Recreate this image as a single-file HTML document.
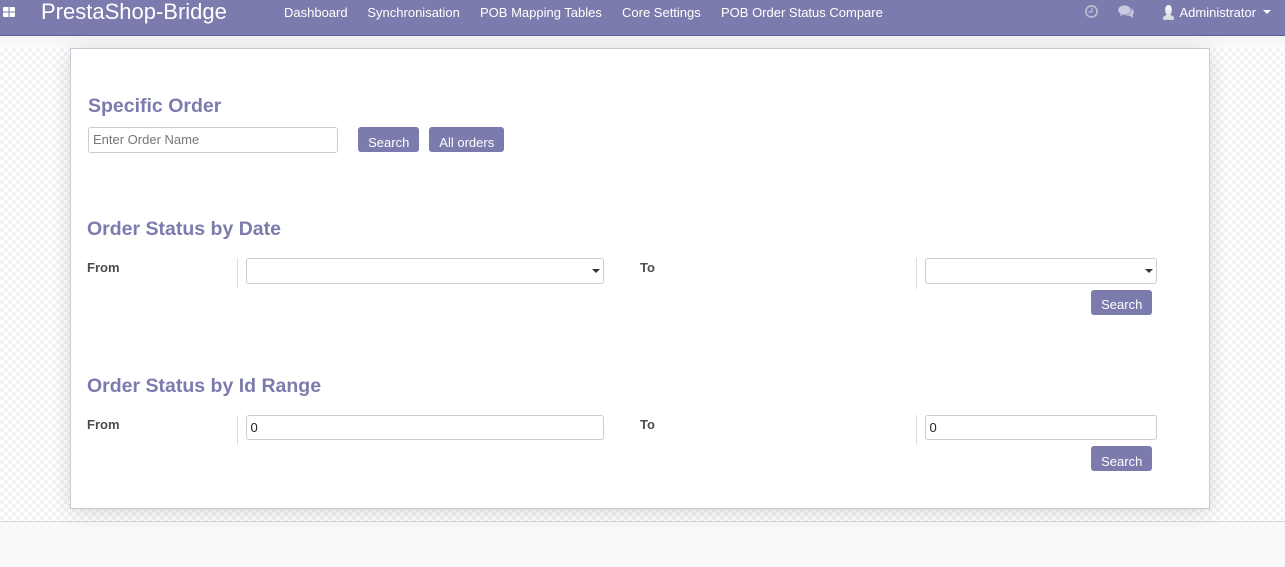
<!DOCTYPE html>
<html><head><meta charset="utf-8"><style>
html,body{margin:0;padding:0}
body{width:1285px;height:567px;overflow:hidden;position:relative;background:#f9f9f9;font-family:"Liberation Sans",sans-serif;font-size:13px;color:#4c4c4c}
.a{position:absolute;white-space:nowrap}
#nav{left:0;top:0;width:1285px;height:35px;background:#7c7bad;border-bottom:1px solid #5f5e97;z-index:3}
.n{color:#fff;font-size:13px;line-height:15px;top:5px}
#wrap{left:0;top:36px;width:1285px;height:485px;background:linear-gradient(#f3f3f3,#fbfbfb 12px);overflow:hidden}
#chk{left:0;top:12px;width:1285px;height:473px;background-color:#fff;background-image:conic-gradient(#f4f4f4 25%,#fff 0 50%,#f4f4f4 0 75%,#fff 0);background-size:8px 8px}
#sheet{left:70px;top:48px;width:1138px;height:459px;background:#fff;border:1px solid #c8c8d4;box-shadow:0 3px 20px rgba(0,0,0,.15)}
#foot{left:0;top:521px;width:1285px;height:46px;background:#f9f9f9;border-top:1px solid #d9d9d9;box-sizing:border-box}
h2{position:absolute;margin:0;font-size:19.5px;line-height:24px;font-weight:bold;color:#7c7bad;white-space:nowrap}
.inp{position:absolute;box-sizing:border-box;background:#fff;border:1px solid #ccc;border-radius:3px;font-size:13px;color:#222;padding-left:4px;white-space:nowrap}
.btn{position:absolute;box-sizing:border-box;height:25px;background:#7c7bad;color:#fff;border-radius:3px;font-size:13px;line-height:15px;padding-top:8px;padding-left:.5px;text-align:center}
.lb{position:absolute;font-weight:bold;font-size:13px;line-height:15px;color:#4c4c4c}
.v{position:absolute;width:1px;height:31px;background:#ddd}
.c{position:absolute;right:3px;top:10px;width:0;height:0;border:4px solid transparent;border-top-color:#333;border-bottom:0}
</style></head><body>
<div class="a" id="wrap"><div class="a" id="chk"></div></div>
<div class="a" id="foot"></div>
<div class="a" id="nav">
<svg class="a" style="left:3px;top:7px" width="12" height="10" viewBox="0 0 12 10"><path fill="#fff" d="M0 1q0-1 1-1h4.500v4.500H0zM6.500 0H11q1 0 1 1v3.500H6.500zM0 5.500h5.500V10H1q-1 0-1-1zM6.500 5.500H12V9q0 1-1 1H6.500z"/></svg>
<div class="a" style="left:41px;top:-2px;color:#fff;font-size:22px;line-height:28px">PrestaShop-Bridge</div>
<div class="a n" style="left:284px">Dashboard</div>
<div class="a n" style="left:367.400px">Synchronisation</div>
<div class="a n" style="left:480px">POB Mapping Tables</div>
<div class="a n" style="left:622px">Core Settings</div>
<div class="a n" style="left:721px">POB Order Status Compare</div>
<svg class="a" style="left:1085px;top:5px" width="13" height="13" viewBox="0 0 13 13"><circle cx="6.500" cy="6.500" r="5.600" fill="none" stroke="#bcbcd6" stroke-width="1.700"/><path d="M7 3v4H3.500" fill="none" stroke="#bcbcd6" stroke-width="1.300"/></svg>
<svg class="a" style="left:1118px;top:5px" width="17" height="14" viewBox="0 0 17 14"><ellipse cx="6.500" cy="5" rx="6.300" ry="4.600" fill="#c9c9df"/><path d="M3 8l-1 3 4-2z" fill="#c9c9df"/><path d="M13.500 3.500C16 5 16.500 8 14.500 9.500L15.500 13 11.500 10.500C9.500 10.800 8 10.500 7 10 11 10 14 7.500 13.500 3.500z" fill="#c9c9df"/></svg>
<svg class="a" style="left:1163px;top:5px" width="11" height="15" viewBox="0 0 11 15"><defs><linearGradient id="g" x1="0" y1="0" x2="0" y2="1"><stop offset="0" stop-color="#fff"/><stop offset="1" stop-color="#d4d4e2"/></linearGradient></defs><path fill="url(#g)" d="M5.500 0C7.500 0 8.800 1.800 8.800 4.500 8.800 7 8 9 7.300 10 9 10.600 11 11.300 11 13v1q0 1-1 1H1q-1 0-1-1v-1c0-1.700 2-2.400 3.700-3C3 9 2.200 7 2.200 4.500 2.200 1.800 3.500 0 5.500 0z"/></svg>
<div class="a n" style="left:1179.500px">Administrator</div>
<div class="a" style="left:1263px;top:10px;width:0;height:0;border:4px solid transparent;border-top-color:#fff;border-bottom:0"></div>
</div>
<div class="a" id="sheet"></div>
<div class="a" style="left:0;top:0;width:1285px;height:567px;z-index:2">
<h2 style="left:88px;top:94px">Specific Order</h2>
<div class="inp" style="left:88px;top:127px;width:250px;height:26px;line-height:23px;color:#777">Enter Order Name</div>
<div class="btn" style="left:358px;top:127px;width:61px">Search</div>
<div class="btn" style="left:429px;top:127px;width:75px">All orders</div>

<h2 style="left:87px;top:217px">Order Status by Date</h2>
<div class="lb" style="left:87px;top:260px">From</div>
<div class="v" style="left:237px;top:258px"></div>
<div class="inp" style="left:246px;top:258px;width:358px;height:26px"><span class="c"></span></div>
<div class="lb" style="left:640px;top:260px">To</div>
<div class="v" style="left:916px;top:258px"></div>
<div class="inp" style="left:925px;top:258px;width:232px;height:26px"><span class="c"></span></div>
<div class="btn" style="left:1091px;top:290px;width:61px;padding-top:7px">Search</div>

<h2 style="left:87px;top:374px">Order Status by Id Range</h2>
<div class="lb" style="left:87px;top:417px">From</div>
<div class="v" style="left:237px;top:415px;height:30px"></div>
<div class="inp" style="left:246px;top:415px;width:358px;height:25px;line-height:24px;padding-left:3.500px">0</div>
<div class="lb" style="left:640px;top:417px">To</div>
<div class="v" style="left:916px;top:415px;height:30px"></div>
<div class="inp" style="left:925px;top:415px;width:232px;height:25px;line-height:24px;padding-left:3.500px">0</div>
<div class="btn" style="left:1091px;top:446px;width:61px">Search</div>
</div>
</body></html>
